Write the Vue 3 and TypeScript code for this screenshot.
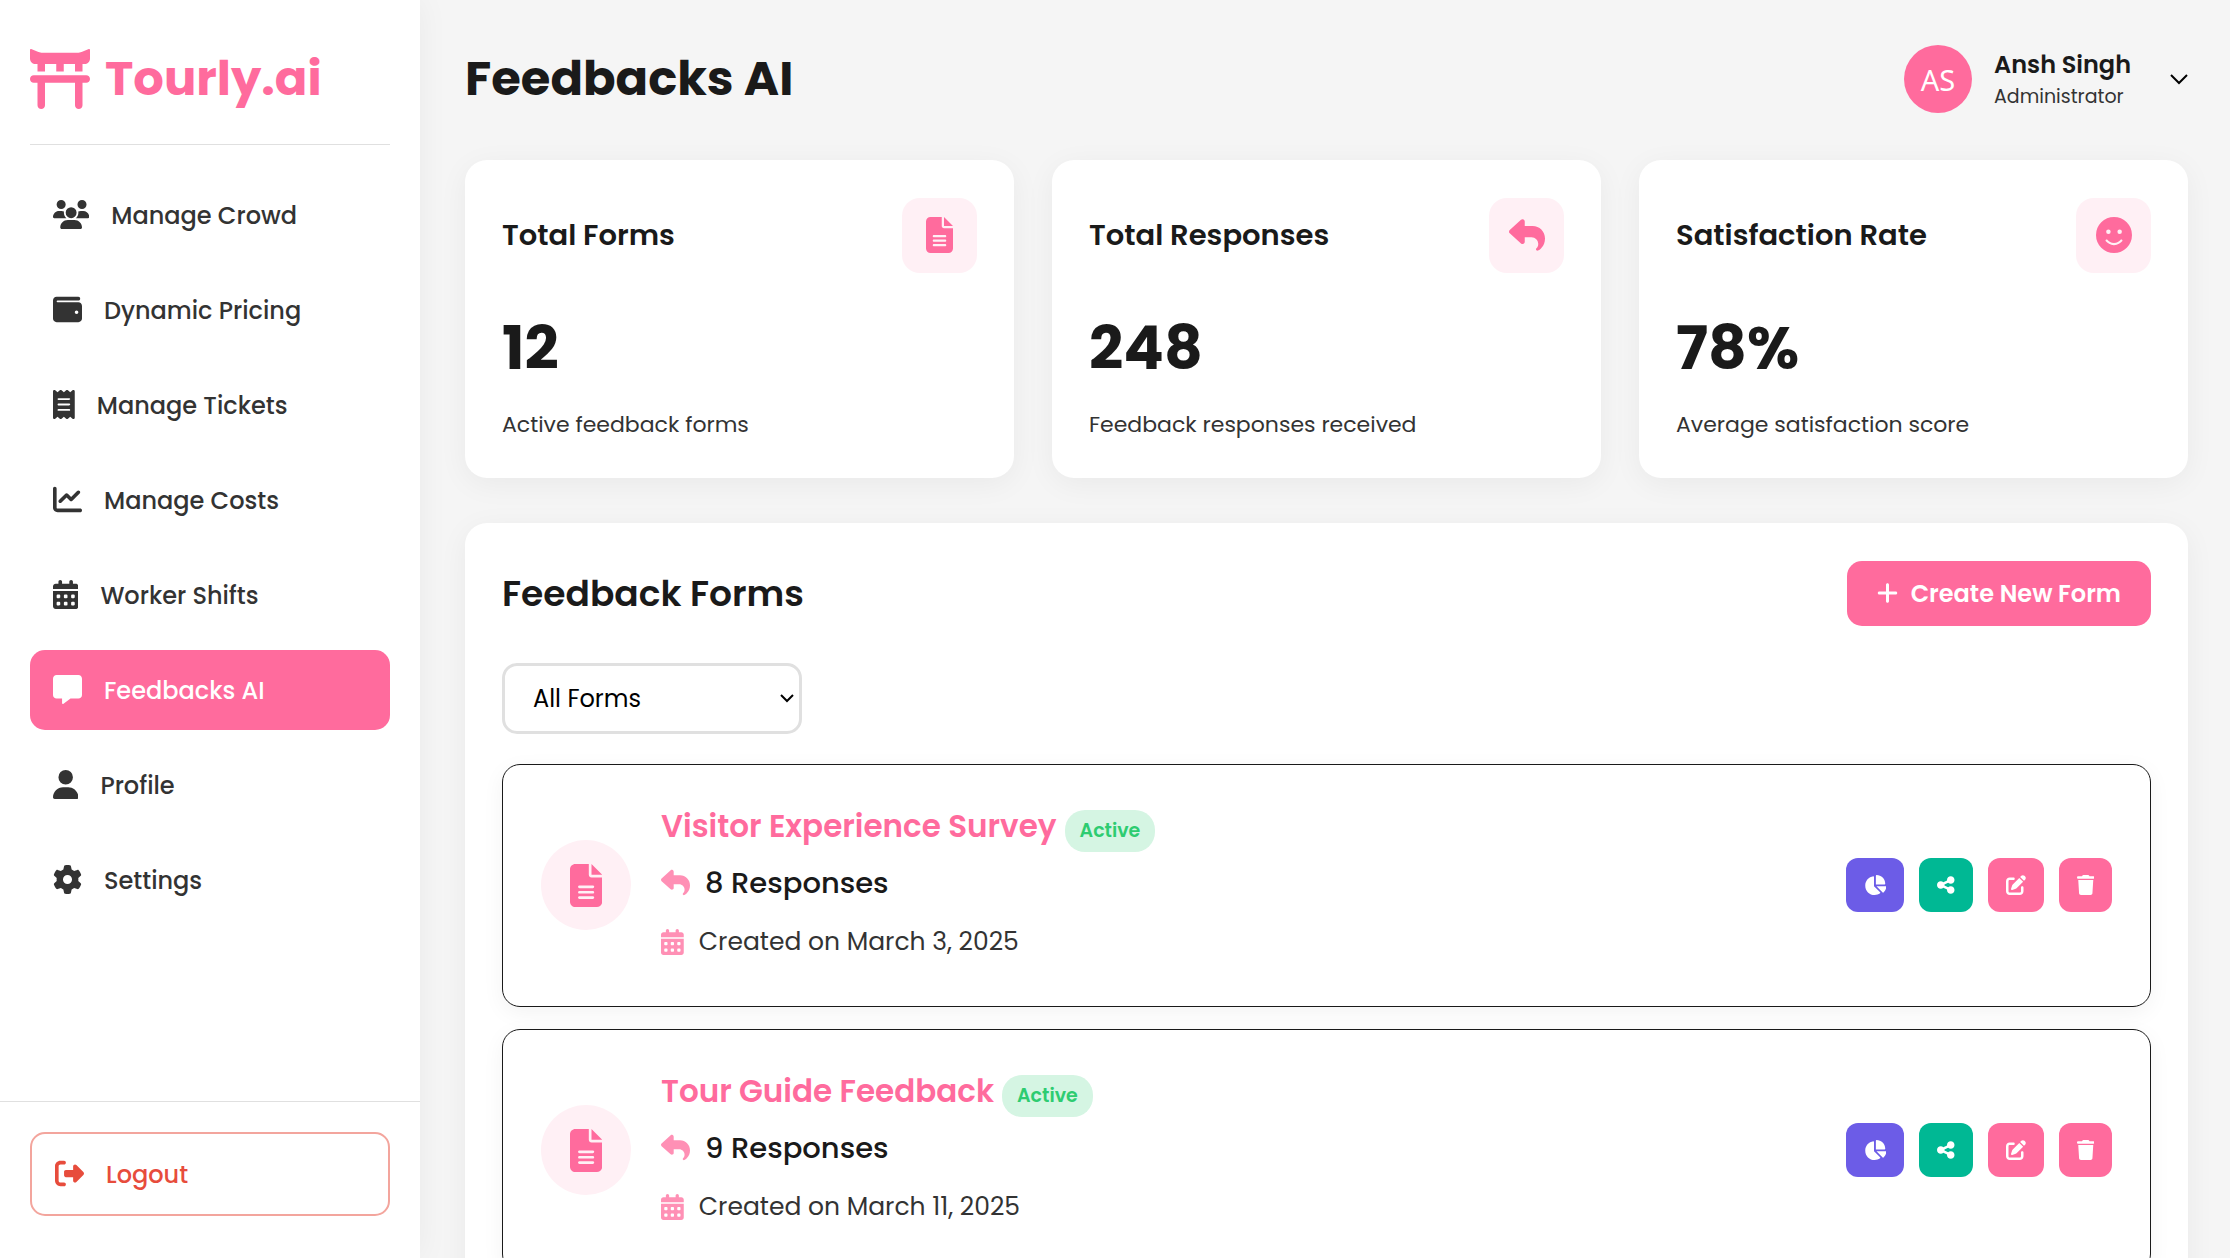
<script setup lang="ts">
import { ref } from 'vue'

interface Icon {
  w: number
  d: string
}

interface NavItem {
  label: string
  icon: Icon
}

interface FeedbackForm {
  id: number
  title: string
  status: string
  responses: number
  created: string
}

const icons: Record<string, Icon> = {
  torii: {
    w: 512,
    d: 'M0 80V9C0 2 4 -1 10 1L72 25C90 30 106 32 122 32H390C406 32 422 30 440 25L502 1C508 -1 512 2 512 9V80C512 106.5 490.5 128 464 128H448V192H384V128H288V192H224V128H128V192H64V128H48C21.5 128 0 106.5 0 80zM32 288C14.3 288 0 273.7 0 256S14.3 224 32 224H480C497.7 224 512 238.3 512 256S497.7 288 480 288H448V480C448 497.7 433.7 512 416 512S384 497.7 384 480V288H128V480C128 497.7 113.7 512 96 512S64 497.7 64 480V288H32z',
  },
  users: {
    w: 640,
    d: 'M144 0a80 80 0 1 1 0 160A80 80 0 1 1 144 0zM512 0a80 80 0 1 1 0 160A80 80 0 1 1 512 0zM0 298.7C0 239.8 47.8 192 106.7 192h42.7c15.9 0 31 3.5 44.6 9.7c-1.3 7.2-1.9 14.7-1.9 22.3c0 38.2 16.8 72.5 43.3 96c-.2 0-.4 0-.7 0H21.3C9.6 320 0 310.4 0 298.7zM405.3 320c-.2 0-.4 0-.7 0c26.6-23.5 43.3-57.8 43.3-96c0-7.6-.7-15-1.9-22.3c13.6-6.3 28.7-9.7 44.6-9.7h42.7C592.2 192 640 239.8 640 298.7c0 11.8-9.6 21.3-21.3 21.3H405.3zM224 224a96 96 0 1 1 192 0 96 96 0 1 1 -192 0zM128 485.3C128 411.7 187.7 352 261.3 352H378.7C452.3 352 512 411.7 512 485.3c0 14.7-11.9 26.7-26.7 26.7H154.7c-14.7 0-26.7-11.9-26.7-26.7z',
  },
  wallet: {
    w: 512,
    d: 'M64 32C28.7 32 0 60.7 0 96V416c0 35.3 28.7 64 64 64H448c35.3 0 64-28.7 64-64V192c0-35.3-28.7-64-64-64H80c-8.8 0-16-7.2-16-16s7.2-16 16-16H448c17.7 0 32-14.3 32-32s-14.3-32-32-32H64zM416 272a32 32 0 1 1 0 64 32 32 0 1 1 0-64z',
  },
  receipt: {
    w: 384,
    d: 'M14 2.2C22.5-1.7 32.5-.3 39.6 5.8L80 40.4 120.4 5.8c9-7.7 22.3-7.7 31.2 0L192 40.4 232.4 5.8c9-7.7 22.3-7.7 31.2 0L304 40.4 344.4 5.8c7.1-6.1 17.1-7.5 25.6-3.6s14 12.4 14 21.8V488c0 9.4-5.5 17.9-14 21.8s-18.5 2.5-25.6-3.6L304 471.6l-40.4 34.6c-9 7.7-22.3 7.7-31.2 0L192 471.6l-40.4 34.6c-9 7.7-22.3 7.7-31.2 0L80 471.6 39.6 506.2c-7.1 6.1-17.1 7.5-25.6 3.6S0 497.4 0 488V24C0 14.6 5.5 6.1 14 2.2zM96 144c-8.8 0-16 7.2-16 16s7.2 16 16 16H288c8.8 0 16-7.2 16-16s-7.2-16-16-16H96zM80 352c0 8.8 7.2 16 16 16H288c8.8 0 16-7.2 16-16s-7.2-16-16-16H96c-8.8 0-16 7.2-16 16zM96 240c-8.8 0-16 7.2-16 16s7.2 16 16 16H288c8.8 0 16-7.2 16-16s-7.2-16-16-16H96z',
  },
  chart: {
    w: 512,
    d: 'M64 64c0-17.7-14.3-32-32-32S0 46.3 0 64V400c0 44.2 35.8 80 80 80H480c17.7 0 32-14.3 32-32s-14.3-32-32-32H80c-8.8 0-16-7.2-16-16V64zm406.6 86.6c12.5-12.5 12.5-32.8 0-45.3s-32.8-12.5-45.3 0L320 210.7l-57.4-57.4c-12.5-12.5-32.8-12.5-45.3 0l-112 112c-12.5 12.5-12.5 32.8 0 45.3s32.8 12.5 45.3 0L240 221.3l57.4 57.4c12.5 12.5 32.8 12.5 45.3 0l128-128z',
  },
  calendar: {
    w: 448,
    d: 'M128 0c17.7 0 32 14.3 32 32V64H288V32c0-17.7 14.3-32 32-32s32 14.3 32 32V64h48c26.5 0 48 21.5 48 48v48H0V112C0 85.5 21.5 64 48 64H96V32c0-17.7 14.3-32 32-32zM0 192H448V464c0 26.5-21.5 48-48 48H48c-26.5 0-48-21.5-48-48V192zm64 80v32c0 8.8 7.2 16 16 16h32c8.8 0 16-7.2 16-16V272c0-8.8-7.2-16-16-16H80c-8.8 0-16 7.2-16 16zm128 0v32c0 8.8 7.2 16 16 16h32c8.8 0 16-7.2 16-16V272c0-8.8-7.2-16-16-16H208c-8.8 0-16 7.2-16 16zm144-16c-8.8 0-16 7.2-16 16v32c0 8.8 7.2 16 16 16h32c8.8 0 16-7.2 16-16V272c0-8.8-7.2-16-16-16H336zM64 400v32c0 8.8 7.2 16 16 16h32c8.8 0 16-7.2 16-16V400c0-8.8-7.2-16-16-16H80c-8.8 0-16 7.2-16 16zm144-16c-8.8 0-16 7.2-16 16v32c0 8.8 7.2 16 16 16h32c8.8 0 16-7.2 16-16V400c0-8.8-7.2-16-16-16H208zm112 16v32c0 8.8 7.2 16 16 16h32c8.8 0 16-7.2 16-16V400c0-8.8-7.2-16-16-16H336c-8.8 0-16 7.2-16 16z',
  },
  message: {
    w: 512,
    d: 'M64 0C28.7 0 0 28.7 0 64V352c0 35.3 28.7 64 64 64h96v80c0 6.1 3.4 11.6 8.8 14.3s11.9 2.1 16.8-1.5L309.3 416H448c35.3 0 64-28.7 64-64V64c0-35.3-28.7-64-64-64H64z',
  },
  user: {
    w: 448,
    d: 'M224 256A128 128 0 1 0 224 0a128 128 0 1 0 0 256zm-45.7 48C79.8 304 0 383.8 0 482.3C0 498.7 13.3 512 29.7 512H418.3c16.4 0 29.7-13.3 29.7-29.7C448 383.8 368.2 304 269.7 304H178.3z',
  },
  gear: {
    w: 512,
    d: 'M495.9 166.6c3.2 8.7 .5 18.4-6.4 24.6l-43.3 39.4c1.1 8.3 1.7 16.8 1.7 25.4s-.6 17.1-1.7 25.4l43.3 39.4c6.9 6.2 9.6 15.9 6.4 24.6c-4.4 11.9-9.7 23.3-15.8 34.3l-4.7 8.1c-6.6 11-14 21.4-22.1 31.2c-5.9 7.2-15.7 9.6-24.5 6.8l-55.7-17.7c-13.4 10.3-28.2 18.9-44 25.4l-12.5 57.1c-2 9.1-9 16.3-18.2 17.8c-13.8 2.3-28 3.5-42.5 3.5s-28.7-1.2-42.5-3.5c-9.2-1.5-16.2-8.7-18.2-17.8l-12.5-57.1c-15.8-6.5-30.6-15.1-44-25.4L83.1 425.9c-8.8 2.8-18.6 .3-24.5-6.8c-8.1-9.8-15.5-20.2-22.1-31.2l-4.7-8.1c-6.1-11-11.4-22.4-15.8-34.3c-3.2-8.7-.5-18.4 6.4-24.6l43.3-39.4C64.6 273.1 64 264.6 64 256s.6-17.1 1.7-25.4L22.4 191.2c-6.9-6.2-9.6-15.9-6.4-24.6c4.4-11.9 9.7-23.3 15.8-34.3l4.7-8.1c6.6-11 14-21.4 22.1-31.2c5.9-7.2 15.7-9.6 24.5-6.8l55.7 17.7c13.4-10.3 28.2-18.9 44-25.4l12.5-57.1c2-9.1 9-16.3 18.2-17.8C227.3 1.2 241.5 0 256 0s28.7 1.2 42.5 3.5c9.2 1.5 16.2 8.7 18.2 17.8l12.5 57.1c15.8 6.5 30.6 15.1 44 25.4l55.7-17.7c8.8-2.8 18.6-.3 24.5 6.8c8.1 9.8 15.5 20.2 22.1 31.2l4.7 8.1c6.1 11 11.4 22.4 15.8 34.3zM256 336a80 80 0 1 0 0-160 80 80 0 1 0 0 160z',
  },
  logout: {
    w: 512,
    d: 'M377.9 105.9L500.7 228.7c7.2 7.2 11.3 17.1 11.3 27.3s-4.1 20.1-11.3 27.3L377.9 406.1c-6.4 6.4-15 9.9-24 9.9c-18.7 0-33.9-15.2-33.9-33.9l0-62.1-128 0c-17.7 0-32-14.3-32-32l0-64c0-17.7 14.3-32 32-32l128 0 0-62.1c0-18.7 15.2-33.9 33.9-33.9c9 0 17.6 3.6 24 9.9zM160 96L96 96c-17.7 0-32 14.3-32 32l0 256c0 17.7 14.3 32 32 32l64 0c17.7 0 32 14.3 32 32s-14.3 32-32 32l-64 0c-53 0-96-43-96-96L0 128C0 75 43 32 96 32l64 0c17.7 0 32 14.3 32 32s-14.3 32-32 32z',
  },
  file: {
    w: 384,
    d: 'M64 0C28.7 0 0 28.7 0 64V448c0 35.3 28.7 64 64 64H320c35.3 0 64-28.7 64-64V160H256c-17.7 0-32-14.3-32-32V0H64zM256 0V128H384L256 0zM112 256H272c8.8 0 16 7.2 16 16s-7.2 16-16 16H112c-8.8 0-16-7.2-16-16s7.2-16 16-16zm0 64H272c8.8 0 16 7.2 16 16s-7.2 16-16 16H112c-8.8 0-16-7.2-16-16s7.2-16 16-16zm0 64H272c8.8 0 16 7.2 16 16s-7.2 16-16 16H112c-8.8 0-16-7.2-16-16s7.2-16 16-16z',
  },
  reply: {
    w: 512,
    d: 'M205 34.8c11.5 5.1 19 16.6 19 29.2v64H336c97.2 0 176 78.8 176 176c0 113.3-81.5 163.9-100.2 174.1c-2.5 1.4-5.3 1.9-8.1 1.9c-10.9 0-19.7-8.9-19.7-19.7c0-7.5 4.3-14.4 9.8-19.5c9.4-8.8 22.2-26.4 22.2-56.7c0-53-43-96-96-96H224v64c0 12.6-7.4 24.1-19 29.2s-25 3-34.4-5.4l-160-144C3.9 225.7 0 217.1 0 208s3.9-17.7 10.6-23.8l160-144c9.4-8.5 22.9-10.6 34.4-5.4z',
  },
  smile: {
    w: 512,
    d: 'M256 512A256 256 0 1 0 256 0a256 256 0 1 0 0 512zM164.1 325.5C182 346.2 212.6 368 256 368s74-21.8 91.9-42.5c5.8-6.7 15.9-7.4 22.6-1.6s7.4 15.9 1.6 22.6C349.8 372.1 311.1 400 256 400s-93.8-27.9-116.1-53.5c-5.8-6.7-5.1-16.8 1.6-22.6s16.8-5.1 22.6 1.6zM144.4 208a32 32 0 1 1 64 0 32 32 0 1 1 -64 0zm192-32a32 32 0 1 1 0 64 32 32 0 1 1 0-64z',
  },
  plus: {
    w: 448,
    d: 'M256 80c0-17.7-14.3-32-32-32s-32 14.3-32 32V224H48c-17.7 0-32 14.3-32 32s14.3 32 32 32H192V432c0 17.7 14.3 32 32 32s32-14.3 32-32V288H400c17.7 0 32-14.3 32-32s-14.3-32-32-32H256V80z',
  },
  pie: {
    w: 576,
    d: 'M304 240V16.6c0-9 7-16.6 16-16.6C443.7 0 544 100.3 544 224c0 9-7.6 16-16.6 16H304zM32 272C32 150.7 122.1 50.3 239 34.3c9.2-1.3 17 6.1 17 15.4V288L412.5 444.5c6.7 6.7 6.2 17.7-1.5 23.1C371.8 495.6 323.8 512 272 512C139.5 512 32 404.6 32 272zm526.4 16c9.3 0 16.6 7.8 15.4 17c-7.7 55.9-34.6 105.6-73.9 142.3c-6 5.6-15.4 5.2-21.2-.7L320 288H558.4z',
  },
  share: {
    w: 448,
    d: 'M352 224c53 0 96-43 96-96s-43-96-96-96s-96 43-96 96c0 4 .2 8 .7 11.9l-94.1 47C145.4 170.2 121.9 160 96 160c-53 0-96 43-96 96s43 96 96 96c25.9 0 49.4-10.2 66.6-26.9l94.1 47c-.5 3.9-.7 7.8-.7 11.9c0 53 43 96 96 96s96-43 96-96s-43-96-96-96c-25.9 0-49.4 10.2-66.6 26.9l-94.1-47c.5-3.9 .7-7.8 .7-11.9s-.2-8-.7-11.9l94.1-47C302.6 213.8 326.1 224 352 224z',
  },
  edit: {
    w: 512,
    d: 'M471.6 21.7c-21.9-21.9-57.3-21.9-79.2 0L362.3 51.7l97.9 97.9 30.1-30.1c21.9-21.9 21.9-57.3 0-79.2L471.6 21.7zm-299.2 220c-6.1 6.1-10.8 13.6-13.5 21.9l-29.6 88.8c-2.9 8.6-.6 18.1 5.8 24.6s15.9 8.7 24.6 5.8l88.8-29.6c8.2-2.7 15.7-7.4 21.9-13.5L437.7 172.3 339.7 74.3 172.4 241.7zM96 64C43 64 0 107 0 160V416c0 53 43 96 96 96H352c53 0 96-43 96-96V320c0-17.7-14.3-32-32-32s-32 14.3-32 32v96c0 17.7-14.3 32-32 32H96c-17.7 0-32-14.3-32-32V160c0-17.7 14.3-32 32-32h96c17.7 0 32-14.3 32-32s-14.3-32-32-32H96z',
  },
  trash: {
    w: 448,
    d: 'M135.2 17.7L128 32H32C14.3 32 0 46.3 0 64S14.3 96 32 96H416c17.7 0 32-14.3 32-32s-14.3-32-32-32H320l-7.2-14.3C307.4 6.8 296.3 0 284.2 0H163.8c-12.1 0-23.2 6.8-28.6 17.7zM416 128H32L53.2 467c1.6 25.3 22.6 45 47.9 45H346.9c25.3 0 46.3-19.7 47.9-45L416 128z',
  },
}

const box = (icon: Icon): string => `0 0 ${icon.w} 512`

const navItems: NavItem[] = [
  { label: 'Manage Crowd', icon: icons.users },
  { label: 'Dynamic Pricing', icon: icons.wallet },
  { label: 'Manage Tickets', icon: icons.receipt },
  { label: 'Manage Costs', icon: icons.chart },
  { label: 'Worker Shifts', icon: icons.calendar },
  { label: 'Feedbacks AI', icon: icons.message },
  { label: 'Profile', icon: icons.user },
  { label: 'Settings', icon: icons.gear },
]
const current = ref('Feedbacks AI')

const stats = [
  { title: 'Total Forms', value: '12', note: 'Active feedback forms', icon: icons.file },
  { title: 'Total Responses', value: '248', note: 'Feedback responses received', icon: icons.reply },
  { title: 'Satisfaction Rate', value: '78%', note: 'Average satisfaction score', icon: icons.smile },
]

const filter = ref('all')

const forms: FeedbackForm[] = [
  { id: 1, title: 'Visitor Experience Survey', status: 'Active', responses: 8, created: 'March 3, 2025' },
  { id: 2, title: 'Tour Guide Feedback', status: 'Active', responses: 9, created: 'March 11, 2025' },
]

const actions = [
  { name: 'Analytics', tone: 'analytics', icon: icons.pie },
  { name: 'Share', tone: 'share', icon: icons.share },
  { name: 'Edit', tone: 'edit', icon: icons.edit },
  { name: 'Delete', tone: 'delete', icon: icons.trash },
]
</script>

<template>
  <div class="layout">
    <aside class="sidebar">
      <a class="logo" href="#">
        <svg :viewBox="box(icons.torii)" aria-hidden="true"><path :d="icons.torii.d" /></svg>
        <span>Tourly.ai</span>
      </a>
      <nav class="nav">
        <a
          v-for="item in navItems"
          :key="item.label"
          href="#"
          class="nav-link"
          :class="{ active: item.label === current }"
          @click.prevent="current = item.label"
        >
          <svg :viewBox="box(item.icon)" aria-hidden="true"><path :d="item.icon.d" /></svg>
          <span>{{ item.label }}</span>
        </a>
      </nav>
      <div class="sidebar-footer">
        <button type="button" class="logout">
          <svg :viewBox="box(icons.logout)" aria-hidden="true"><path :d="icons.logout.d" /></svg>
          <span>Logout</span>
        </button>
      </div>
    </aside>

    <main class="main">
      <header class="topbar">
        <h1>Feedbacks AI</h1>
        <div class="profile">
          <div class="avatar">AS</div>
          <div class="who">
            <div class="name">Ansh Singh</div>
            <div class="role">Administrator</div>
          </div>
          <button type="button" class="profile-toggle" aria-label="Open profile menu">
            <svg viewBox="0 0 18 12" aria-hidden="true"><path d="M1 2L9 10L17 2" /></svg>
          </button>
        </div>
      </header>

      <section class="stats">
        <article v-for="stat in stats" :key="stat.title" class="stat">
          <div class="stat-head">
            <h2>{{ stat.title }}</h2>
            <div class="stat-icon">
              <svg :viewBox="box(stat.icon)" aria-hidden="true"><path :d="stat.icon.d" /></svg>
            </div>
          </div>
          <div class="stat-value">{{ stat.value }}</div>
          <p class="stat-note">{{ stat.note }}</p>
        </article>
      </section>

      <section class="panel">
        <div class="panel-head">
          <h2>Feedback Forms</h2>
          <button type="button" class="create">
            <svg :viewBox="box(icons.plus)" aria-hidden="true"><path :d="icons.plus.d" /></svg>
            <span>Create New Form</span>
          </button>
        </div>

        <div class="filter">
          <select v-model="filter" aria-label="Filter forms">
            <option value="all">All Forms</option>
            <option value="active">Active</option>
            <option value="closed">Closed</option>
          </select>
          <svg class="filter-arrow" viewBox="0 0 14 9" aria-hidden="true"><path d="M1 1L7 7L13 1" /></svg>
        </div>

        <div class="forms">
          <article v-for="form in forms" :key="form.id" class="form">
            <div class="form-icon">
              <svg :viewBox="box(icons.file)" aria-hidden="true"><path :d="icons.file.d" /></svg>
            </div>
            <div class="form-info">
              <h3>
                <span>{{ form.title }}</span>
                <span class="badge">{{ form.status }}</span>
              </h3>
              <p class="responses">
                <svg :viewBox="box(icons.reply)" aria-hidden="true"><path :d="icons.reply.d" /></svg>
                <span>{{ form.responses }} Responses</span>
              </p>
              <p class="created">
                <svg :viewBox="box(icons.calendar)" aria-hidden="true"><path :d="icons.calendar.d" /></svg>
                <span>Created on {{ form.created }}</span>
              </p>
            </div>
            <div class="actions">
              <button
                v-for="action in actions"
                :key="action.name"
                type="button"
                class="action"
                :class="action.tone"
                :aria-label="action.name + ' ' + form.title"
              >
                <svg :viewBox="box(action.icon)" aria-hidden="true"><path :d="action.icon.d" /></svg>
              </button>
            </div>
          </article>
        </div>
      </section>
    </main>
  </div>
</template>

<style>
body {
  margin: 0;
  background: #f5f5f5;
}
</style>

<style scoped>
.layout {
  display: flex;
  height: 100vh;
  color: #1a1a1a;
  font-family: Poppins, Inter, sans-serif;
  font-size: 24px;
}

.layout * {
  box-sizing: border-box;
}

svg {
  display: block;
  flex: none;
  fill: currentColor;
}

h1,
h2,
h3,
p {
  margin: 0;
}

button,
select {
  font: inherit;
  cursor: pointer;
}

button {
  border: 0;
}

a {
  color: inherit;
  text-decoration: none;
}

.sidebar {
  display: flex;
  flex: none;
  flex-direction: column;
  width: 420px;
  background: #fff;
  box-shadow: 0 0 30px rgba(0, 0, 0, 0.05);
  z-index: 1;
}

.logo {
  display: flex;
  align-items: center;
  gap: 15px;
  margin: 0 30px;
  padding: 46px 0 32px;
  border-bottom: 1px solid #e0e0e0;
  color: #ff6b9d;
  font-size: 48px;
  font-weight: 700;
  line-height: 66px;
}

.logo svg {
  height: 60px;
}

.nav {
  display: flex;
  flex: 1;
  flex-direction: column;
  gap: 15px;
  padding: 30px;
}

.nav-link,
.logout {
  display: flex;
  align-items: center;
  gap: 22px;
  padding: 0 23px;
  border-radius: 15px;
  font-weight: 500;
}

.nav-link {
  height: 80px;
  color: #333;
}

.nav-link.active {
  background: #ff6b9d;
  color: #fff;
}

.nav-link svg,
.logout svg {
  height: 29px;
  margin-bottom: 2px;
}

.sidebar-footer {
  padding: 30px 30px 42px;
  border-top: 1px solid #e0e0e0;
}

.logout {
  width: 100%;
  height: 84px;
  border: 2px solid #f3a59d;
  background: #fff;
  color: #e74c3c;
}

.main {
  flex: 1;
  min-width: 0;
  padding: 45px 42px 45px 45px;
  overflow-y: auto;
  scrollbar-width: none;
}

.topbar {
  display: flex;
  align-items: center;
  justify-content: space-between;
  height: 68px;
  margin-bottom: 47px;
}

h1 {
  font-size: 48px;
  font-weight: 700;
  line-height: 66px;
}

.profile {
  display: flex;
  align-items: center;
}

.avatar {
  display: flex;
  align-items: center;
  justify-content: center;
  width: 68px;
  height: 68px;
  margin-right: 22px;
  border-radius: 50%;
  background: #ff6b9d;
  color: #fff;
  font-family: 'Noto Sans', 'Open Sans', sans-serif;
  font-size: 29px;
}

.name {
  font-weight: 600;
  line-height: 36px;
}

.role {
  color: #333;
  font-size: 19px;
  line-height: 28px;
}

.profile-toggle {
  margin-left: 39px;
  padding: 0;
  background: none;
  color: #000;
}

.profile-toggle svg {
  width: 18px;
  fill: none;
  stroke: currentColor;
  stroke-width: 2;
}

.stats {
  display: grid;
  grid-template-columns: repeat(3, 1fr);
  gap: 38px;
  margin-bottom: 45px;
}

.stat,
.panel {
  padding: 38px 37px 37px;
  border-radius: 22px;
  background: #fff;
  box-shadow: 0 6px 30px rgba(0, 0, 0, 0.05);
}

.stat-head,
.panel-head {
  display: flex;
  align-items: center;
  justify-content: space-between;
}

.stat h2 {
  font-size: 29px;
  font-weight: 600;
}

.stat-icon {
  display: flex;
  align-items: center;
  justify-content: center;
  width: 75px;
  height: 75px;
  border-radius: 18px;
  background: #fff0f5;
  color: #ff6b9d;
}

.stat-icon svg {
  height: 36px;
  margin-bottom: 2px;
}

.stat-value {
  margin: 30px 0 16px;
  font-size: 60px;
  font-weight: 700;
  line-height: 90px;
}

.stat-note {
  color: #333;
  font-size: 22px;
  line-height: 32px;
}

.panel h2 {
  font-size: 36px;
  font-weight: 600;
}

.create {
  display: flex;
  align-items: center;
  gap: 13px;
  height: 65px;
  padding: 0 30px;
  border-radius: 15px;
  background: #ff6b9d;
  color: #fff;
  font-weight: 600;
}

.create svg {
  height: 24px;
  margin-bottom: 2px;
}

.filter {
  position: relative;
  width: 300px;
  margin: 37px 0 30px;
}

.filter select {
  display: block;
  width: 100%;
  height: 71px;
  padding: 0 28px;
  border: 3px solid #e0e0e0;
  border-radius: 15px;
  background: #fff;
  color: #000;
  appearance: none;
}

.filter-arrow {
  position: absolute;
  top: 31px;
  right: 8px;
  width: 14px;
  fill: none;
  stroke: #000;
  stroke-width: 2;
  pointer-events: none;
}

.forms {
  display: flex;
  flex-direction: column;
  gap: 22px;
}

.form {
  display: flex;
  align-items: center;
  padding: 37px 38px 38px;
  border: 1px solid #1a1a1a;
  border-radius: 18px;
  background: #fff;
  box-shadow: 0 6px 22px rgba(0, 0, 0, 0.05);
}

.form-icon {
  display: flex;
  align-items: center;
  justify-content: center;
  width: 90px;
  height: 90px;
  margin-right: 30px;
  border-radius: 50%;
  background: #fff0f5;
  color: #ff6b9d;
}

.form-icon svg {
  height: 43px;
}

.form-info {
  flex: 1;
}

.form-info h3 {
  display: flex;
  align-items: baseline;
  gap: 8px;
  height: 48px;
  margin-bottom: 10px;
  color: #ff6b9d;
  font-size: 31px;
  font-weight: 600;
  line-height: 48px;
}

.badge {
  padding: 7px 15px;
  border-radius: 20px;
  background: #d5f5e3;
  color: #2ecc71;
  font-size: 19px;
  font-weight: 600;
  line-height: 28px;
}

.responses,
.created {
  display: flex;
  align-items: center;
  gap: 15px;
}

.responses {
  margin-bottom: 16px;
  font-size: 29px;
  font-weight: 500;
  line-height: 46px;
}

.created {
  margin-bottom: 6px;
  color: #333;
  font-size: 25px;
  line-height: 40px;
}

.responses svg,
.created svg {
  color: #ff6b9d;
  opacity: 0.75;
}

.responses svg {
  height: 29px;
  margin-bottom: 2px;
}

.created svg {
  height: 26px;
}

.actions {
  display: flex;
  gap: 15px;
}

.action {
  display: flex;
  align-items: center;
  height: 54px;
  padding: 0 18px;
  border-radius: 12px;
  background: #ff6b9d;
  color: #fff;
}

.action svg {
  height: 20px;
}

.action.analytics {
  background: #6c5ce7;
}

.action.share {
  background: #00b894;
}
</style>
